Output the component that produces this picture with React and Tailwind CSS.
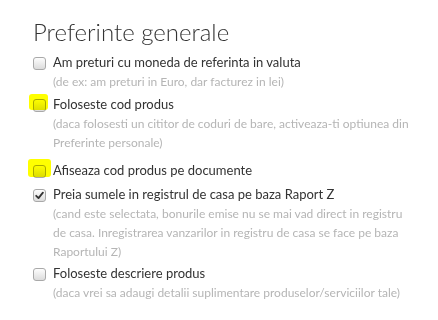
import React from "react";

function Box({ checked }) {
  return (
    <div className="mt-[5px] flex h-[13px] w-[13px] shrink-0 items-center justify-center rounded-[3px] border border-[#a9a9a9] bg-gradient-to-b from-[#fdfdfd] to-[#dcdcdc]">
      {checked && (
        <svg width="9" height="9" viewBox="0 0 9 9">
          <path d="M1.2 4.8 L3.5 7.1 L7.9 1.6" fill="none" stroke="#333" strokeWidth="1.8" strokeLinecap="round" strokeLinejoin="round" />
        </svg>
      )}
    </div>
  );
}

function Item({ label, sub, checked, className = "" }) {
  return (
    <div className={"flex gap-[7px] " + className}>
      <Box checked={checked} />
      <div className="flex flex-col">
        <div className="text-[13px] leading-[20px] text-[#333]">{label}</div>
        {sub && <div className="text-[12px] leading-[19px] text-[#b5b5b5]">{sub}</div>}
      </div>
    </div>
  );
}

export default function App() {
  return (
    <div className="relative h-[320px] w-[438px] bg-white pl-[33px] pt-[18px]" style={{ fontFamily: "Lato, 'Noto Sans', sans-serif" }}>
      <h1 className="text-[24px] font-light leading-[28px] text-[#333]">Preferinte generale</h1>
      <Item className="mt-[6px]" label="Am preturi cu moneda de referinta in valuta" sub="(de ex: am preturi in Euro, dar facturez in lei)" />
      <Item className="mt-[3px]" label="Foloseste cod produs" sub={<>(daca folosesti un cititor de coduri de bare, activeaza-ti optiunea din<br />Preferinte personale)</>} />
      <Item className="mt-[8px]" label="Afiseaza cod produs pe documente" />
      <Item className="mt-[4px]" checked label="Preia sumele in registrul de casa pe baza Raport Z" sub={<>(cand este selectata, bonurile emise nu se mai vad direct in registru<br />de casa. Inregistrarea vanzarilor in registru de casa se face pe baza<br />Raportului Z)</>} />
      <Item className="mt-[2px]" label="Foloseste descriere produs" sub="(daca vrei sa adaugi detalii suplimentare produselor/serviciilor tale)" />
      <div className="pointer-events-none absolute left-[29px] top-[94px] h-[16px] w-[19px] rounded-[3px] bg-[#ffff00] mix-blend-multiply" />
      <div className="pointer-events-none absolute left-[28px] top-[159px] h-[18px] w-[23px] rounded-[3px] bg-[#ffff00] mix-blend-multiply" />
    </div>
  );
}
